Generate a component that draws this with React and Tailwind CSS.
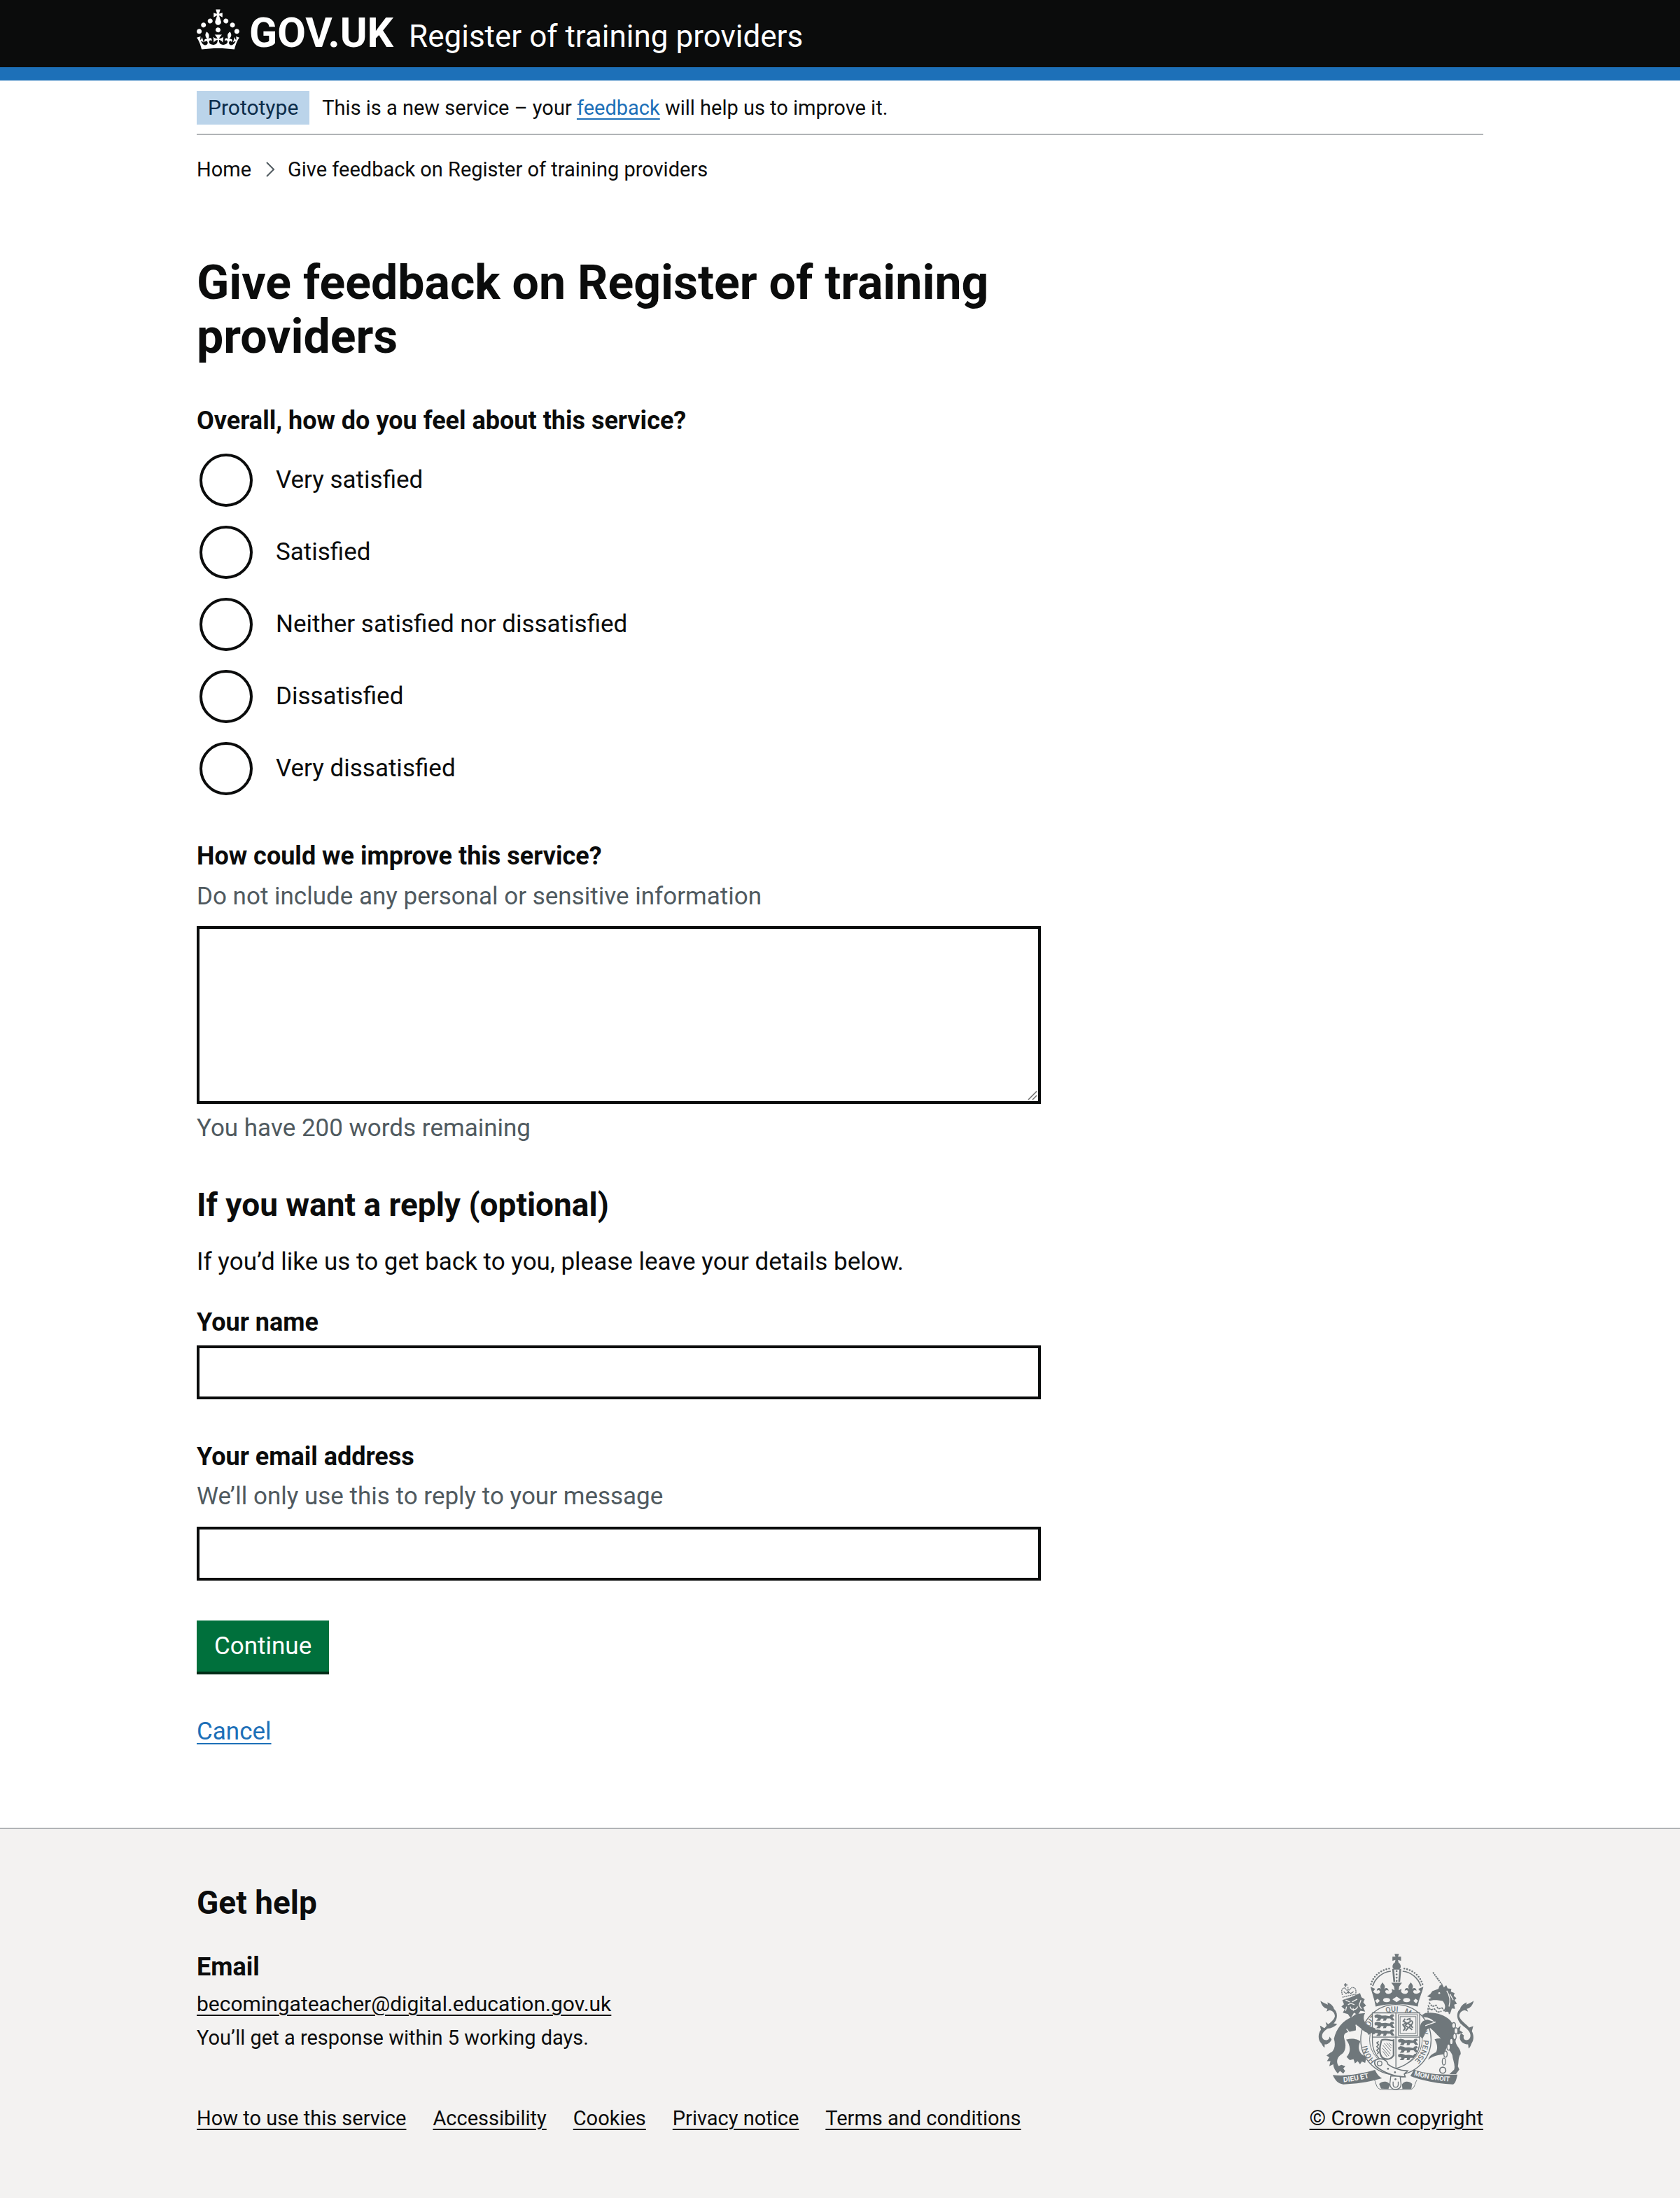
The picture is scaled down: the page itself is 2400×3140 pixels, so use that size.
import React from "react";

const inkLink =
  "text-[#0b0c0c] underline decoration-2 underline-offset-[5px]";
const blueLink =
  "text-[#1d70b8] underline decoration-2 underline-offset-[5px]";
const field =
  "block w-full border-4 border-[#0b0c0c] bg-white px-2 text-[35px] leading-[48px] rounded-none";
const bold = "text-[36px] leading-[48px] font-bold";
const hint = "text-[35px] leading-[48px] text-[#505a5f]";

const options = [
  "Very satisfied",
  "Satisfied",
  "Neither satisfied nor dissatisfied",
  "Dissatisfied",
  "Very dissatisfied",
];

const footerLinks = [
  "How to use this service",
  "Accessibility",
  "Cookies",
  "Privacy notice",
  "Terms and conditions",
];

function Container({ className = "", children }) {
  return (
    <div className={"mx-auto w-full max-w-[1898px] px-[30px] " + className}>
      {children}
    </div>
  );
}

function Crown() {
  return (
    <svg viewBox="0 0 32 30" className="h-[58px] w-[61px] shrink-0" fill="currentColor" aria-hidden="true">
      <path d="M22.6 10.4c-1 .4-2-.1-2.4-1-.4-.9.1-2 1-2.4.9-.4 2 .1 2.4 1s-.1 2-1 2.4m-5.9 6.7c-.9.4-2-.1-2.4-1-.4-.9.1-2 1-2.4.9-.4 2 .1 2.4 1s-.1 2-1 2.4m10.8-3.7c-1 .4-2-.1-2.4-1-.4-.9.1-2 1-2.4.9-.4 2 .1 2.4 1s0 2-1 2.4m3.3 4.8c-1 .4-2-.1-2.4-1-.4-.9.1-2 1-2.4.9-.4 2 .1 2.4 1s-.1 2-1 2.4M17 4.7l2.3 1.2V2.5l-2.3.7-.2-.2.9-3h-3.4l.9 3-.2.2c-.1.1-2.3-.7-2.3-.7v3.4L15 4.7c.1.1.1.2.2.2l-1.3 4c-.1.2-.1.4-.1.6 0 1.1.8 2 1.9 2.2h.7c1-.2 1.9-1.1 1.9-2.1 0-.2 0-.4-.1-.6l-1.3-4c-.1-.2 0-.2.1-.3m-7.6 5.7c.9.4 2-.1 2.4-1 .4-.9-.1-2-1-2.4-.9-.4-2 .1-2.4 1s0 2 1 2.4m-5 3c.9.4 2-.1 2.4-1 .4-.9-.1-2-1-2.4-.9-.4-2 .1-2.4 1s.1 2 1 2.4m-3.2 4.8c.9.4 2-.1 2.4-1 .4-.9-.1-2-1-2.4-.9-.4-2 .1-2.4 1s0 2 1 2.4m14.8 11c4.4 0 8.6.3 12.3.8 1.1-4.5 2.4-7 3.7-8.8l-2.5-.9c.2 1.3.3 1.9 0 2.7-.4-.4-.8-1.1-1.1-2.3l-1.2 4c.7-.5 1.3-.8 2-.9-1.1 2.5-2.6 3.1-3.5 3-1.1-.2-1.7-1.2-1.5-2.1.3-1.2 1.5-1.5 2.1-.1 1.1-2.3-.8-3-2-2.3 1.9-1.9 2.1-3.5.6-5.6-2.1 1.6-2.1 3.2-1.2 5.5-1.2-1.4-3.2-.6-2.5 1.6.9-1.4 2.1-.5 1.9.8-.2 1.1-1.7 2.1-3.5 1.9-2.7-.2-2.9-2.1-2.9-3.6.7-.1 1.9.5 2.9 1.9l.4-4.3c-1.1 1.1-2.1 1.4-3.2 1.4.4-1.2 2.1-3 2.1-3h-5.4s1.7 1.9 2.1 3c-1.1 0-2.1-.2-3.2-1.4l.4 4.3c1-1.4 2.2-2 2.9-1.9-.1 1.5-.2 3.4-2.9 3.6-1.9.2-3.4-.8-3.5-1.9-.2-1.3 1-2.2 1.9-.8.7-2.3-1.2-3-2.5-1.6.9-2.2.9-3.9-1.2-5.5-1.5 2-1.3 3.7.6 5.6-1.2-.7-3.1 0-2 2.3.6-1.4 1.8-1.1 2.1.1.2.9-.3 1.9-1.5 2.1-.9.2-2.4-.5-3.5-3 .6 0 1.2.3 2 .9l-1.2-4c-.3 1.1-.7 1.9-1.1 2.3-.3-.8-.2-1.4 0-2.7l-2.9.9C1.3 23 2.6 25.5 3.7 30c3.7-.5 7.9-.8 12.3-.8" />
    </svg>
  );
}

/* One walking lion, used in the shield quarters. */
const passant =
  "M2 4 L12 0 L24 2 L32 6 L48 5 L66 8 L72 1 L82 0 L86 8 L78 11 L82 18 L88 26 L76 27 L68 18 L54 18 L50 27 L38 28 L40 19 L30 19 L24 28 L8 28 L16 19 L12 15 L4 16 L1 10 Z";

function CoatOfArms() {
  const ink = "#6f777b";
  const paper = "#f3f2f1";
  return (
    <svg viewBox="100 60 670 592" className="h-[197px] w-[223px]" aria-hidden="true">
      <defs>
        <path id="garter" d="M349 525 A122 122 0 1 1 480 545" />
        <path id="motto-left" d="M209 614 Q275 609 345 588" />
        <path id="motto-right" d="M511 585 Q590 609 680 612" />
        <clipPath id="shield">
          <path d="M333 317 H536 V440 C536 500 490 540 434 556 C380 540 333 500 333 440 Z" />
        </clipPath>
      </defs>

      {/* garter */}
      <circle cx="434" cy="432" r="151" fill={paper} stroke={ink} strokeWidth="4" />
      <circle cx="434" cy="432" r="113" fill={paper} stroke={ink} strokeWidth="3" />
      <text fill={ink} fontFamily="Roboto, sans-serif" fontWeight="500" fontSize="32">
        <textPath href="#garter" startOffset="4">HONI</textPath>
        <textPath href="#garter" startOffset="140">SOIT</textPath>
        <textPath href="#garter" startOffset="256">QUI</textPath>
        <textPath href="#garter" startOffset="334">MAL</textPath>
        <textPath href="#garter" startOffset="448">Y</textPath>
        <textPath href="#garter" startOffset="486">PENSE</textPath>
      </text>

      {/* shield */}
      <path d="M333 317 H536 V440 C536 500 490 540 434 556 C380 540 333 500 333 440 Z" fill={paper} stroke={ink} strokeWidth="4" />
      <g clipPath="url(#shield)" fill={ink}>
        <path d={passant} transform="translate(341 323)" />
        <path d={passant} transform="translate(341 355)" />
        <path d={passant} transform="translate(341 388)" />
        <path d={passant} transform="translate(442 428)" />
        <path d={passant} transform="translate(442 460)" />
        <path d={passant} transform="translate(442 492)" />
        <g fill="none" stroke={ink} strokeWidth="3">
          <path d="M434 317 V560 M333 421 H536" strokeWidth="4" />
          <rect x="444" y="325" width="84" height="88" />
          <rect x="452" y="333" width="68" height="72" />
          <path d="M474 342 l-8 10 12 8 -14 8 10 14 -8 12 M480 346 l14 -4 2 12 -12 8 12 6 -4 12 12 10 M484 360 l-10 12 14 8 -12 14 M500 350 q10 6 2 16 q-6 10 6 14" strokeWidth="6" />
          <path d="M372 434 C362 470 362 500 380 512 M372 434 C395 425 415 440 424 434 V500 C410 520 395 518 380 512" strokeWidth="7" />
          <path d="M384 448 L412 480 M378 456 L410 494 M376 468 L404 502 M378 482 L396 506 M394 446 L414 468 M404 446 L416 458" />
          <path d="M360 440 l-8 6 8 8 -8 8 8 8 -8 8 8 8 -6 8" strokeWidth="5" />
        </g>
      </g>

      {/* crown */}
      <g fill={ink}>
        <path d="M428 64 h19 l-4 12 h13 v18 l-13 -5 3 16 h-17 l3 -16 -13 5 v-18 h13 z" />
        <path d="M437 98 c12 2 20 12 17 25 l-6 8 h-22 l-6 -8 c-3 -13 5 -23 17 -25 z" />
        <path d="M418 128 h8 l5 56 h-8 z M457 128 h-8 l-5 56 h8 z" />
        <circle cx="437" cy="138" r="4" />
        <circle cx="437" cy="152" r="4" />
        <circle cx="437" cy="166" r="4" />
        <circle cx="437" cy="180" r="4" />
        <path d="M325 205 L345 214 L336 226 C350 240 364 236 366 226 C364 216 354 218 352 224 C350 208 366 206 372 216 C362 204 370 196 376 186 C384 196 392 204 382 216 C388 206 404 208 402 224 C400 216 388 218 388 226 C392 240 410 238 418 226 L416 214 L428 220 L426 204 L414 188 H460 L448 204 L446 220 L458 214 L456 226 C464 238 482 240 486 226 C486 218 474 216 472 224 C470 208 486 206 492 216 C482 204 490 196 498 186 C506 196 512 204 502 216 C508 206 524 208 522 224 C520 218 510 216 508 226 C510 236 526 240 540 226 L530 214 L552 205 C545 235 532 258 528 290 C470 276 404 276 347 290 C342 258 332 235 325 205 Z" />
      </g>
      <g fill={paper}>
        <path d="M437 247 l18 12 -18 12 -18 -12 z" />
        <ellipse cx="394" cy="262" rx="15" ry="9" />
        <ellipse cx="480" cy="262" rx="15" ry="9" />
        <path d="M345 264 l11 -8 9 10 -12 10 z M529 264 l-11 -8 -9 10 12 10 z" />
      </g>
      <g fill="none" stroke={ink}>
        <path d="M334 202 C346 166 376 142 412 138 M541 202 C529 166 499 142 463 138" strokeWidth="5" />
        <path d="M327 194 C338 156 372 130 412 126 M548 194 C537 156 503 130 463 126" strokeWidth="8" strokeLinecap="round" strokeDasharray="0 12" />
      </g>

      {/* lion */}
      <g fill={ink}>
        <path d="M245 335 C205 350 178 385 168 428 C178 462 166 484 152 488 L136 500 L148 508 L138 524 L153 524 L148 546 L165 538 C166 556 176 566 184 578 L194 566 L208 578 L216 566 L208 556 L217 546 L200 540 L188 545 C176 528 182 508 196 498 C222 484 220 452 213 430 C206 408 218 400 236 398 L262 392 L262 368 C282 378 292 396 310 402 L318 412 L328 402 L340 410 L350 398 L346 384 L332 378 L310 370 C294 352 292 334 302 318 L262 322 Z" />
        <path d="M220 432 C246 424 272 430 281 440 C270 462 274 482 288 496 L307 508 L302 532 L288 526 L280 538 L270 524 L258 534 L252 516 L236 520 L222 506 C242 488 240 456 220 432 Z" />
        <path d="M204 262 L240 250 L280 232 L286 250 L300 258 L294 272 L306 286 L294 294 L302 312 L282 308 L270 326 L254 316 L240 340 L228 322 L206 316 L214 302 L200 290 L211 280 Z" />
        <path d="M110 265 C125 276 136 278 142 282 L140 272 C155 278 166 288 168 300 C182 312 186 335 172 356 C160 374 130 388 120 404 C112 420 120 434 134 434 C146 434 150 424 148 418 L158 430 C152 446 138 454 128 452 L128 466 C118 460 118 452 112 446 C98 432 100 404 112 390 L108 372 C118 376 122 382 128 382 C140 366 168 352 172 332 C172 318 160 306 148 306 L136 312 L140 300 C124 296 114 284 110 265 Z" />
        <path d="M132 356 L144 366 C154 360 166 362 182 364 C172 376 156 384 140 384 Z" />
      </g>
      <g fill="none" stroke={paper} strokeWidth="4">
        <path d="M218 262 L236 270 M246 270 L268 258 M228 282 L240 276 L256 282 M238 290 C240 308 262 308 270 290 M284 262 L276 284 L286 300 M250 296 L252 308 M222 290 L218 308" />
        <path d="M222 386 L236 404 M262 368 L268 390" />
      </g>
      <g fill="none" stroke={ink} strokeWidth="4">
        <path d="M204 240 C198 218 202 212 214 210 L226 222 M262 232 C264 214 258 208 246 208 L232 220 M204 250 L264 236 M228 206 L230 234" strokeDasharray="6 2" />
        <path d="M210 226 l10 8 10 -8 10 8 12 -8" />
        <path d="M218 190 V206 M211 197 H226" strokeWidth="5" />
      </g>

      {/* unicorn */}
      <path d="M593 143 L632 196" stroke={ink} strokeWidth="6" strokeDasharray="7 3" />
      <g fill={ink}>
        <path d="M568 246 L582 236 L590 224 L616 214 L622 200 L634 196 L640 208 L650 198 L656 212 L672 214 L670 226 L686 232 L682 244 L694 254 L686 262 L696 278 L684 282 L688 300 L674 298 L668 318 L640 306 C650 292 644 276 634 266 L610 262 L594 262 L578 266 L574 258 L586 252 Z" />
        <path d="M560 318 C590 312 640 320 668 350 C690 380 694 410 690 440 C694 462 714 472 712 494 C700 508 704 530 700 546 L706 560 L692 580 H664 L684 560 C690 540 678 520 676 498 C666 470 640 470 640 440 C620 420 600 398 582 382 C566 384 560 396 558 410 L548 428 L536 416 L538 376 C540 356 552 348 570 346 L600 356 C590 344 570 334 552 336 L546 326 Z" />
        <path d="M600 430 C620 424 640 426 650 436 C656 460 648 482 640 494 C618 498 594 500 572 518 C580 500 588 494 606 486 C616 466 610 448 600 430 Z" />
        <path d="M768 265 C753 276 742 278 736 282 L738 272 C723 278 712 288 710 300 C696 312 692 335 706 356 C718 374 744 384 752 404 C758 420 750 434 736 434 C726 434 722 424 726 414 L714 404 C698 430 718 452 744 452 L746 470 C756 462 756 452 760 446 C770 432 768 410 760 396 L766 374 L748 380 C738 366 712 352 706 332 C706 318 718 306 730 306 L744 312 L738 300 C754 296 764 284 768 265 Z" />
        <path d="M694 388 L712 372 L708 392 L722 402 L700 410 Z" />
      </g>
      <circle cx="620" cy="232" r="4" fill={paper} />
      <g fill="none" stroke={paper} strokeWidth="4">
        <path d="M652 222 C664 240 670 262 662 290 M666 236 L680 262 M560 372 L604 356" />
      </g>
      <path d="M576 272 L590 290 L606 284 L616 300 L632 296 L644 312 L660 306 L664 322 M572 284 L582 304 L600 300 L612 314 L630 310 M572 296 V330" fill="none" stroke={ink} strokeWidth="5" strokeDasharray="9 3" />
      <g fill={paper} stroke={ink} strokeWidth="4">
        <ellipse cx="682" cy="371" rx="8" ry="12" />
        <ellipse cx="692" cy="394" rx="8" ry="13" />
        <ellipse cx="686" cy="418" rx="7" ry="13" />
        <ellipse cx="672" cy="440" rx="7" ry="13" />
        <ellipse cx="660" cy="464" rx="7" ry="13" />
        <ellipse cx="647" cy="494" rx="7" ry="13" />
        <ellipse cx="640" cy="526" rx="7" ry="15" />
        <circle cx="635" cy="563" r="13" strokeWidth="5" />
      </g>

      {/* ribbon and buckle */}
      <path d="M342 604 C350 622 350 644 372 646 H496 C516 642 514 620 524 606" fill="none" stroke={ink} strokeWidth="3" />
      <path d="M362 622 C378 606 404 612 408 626 L402 644 L370 642 Z M504 622 C488 606 464 612 460 626 L462 644 H500 Z" fill={ink} />
      <path d="M163 584 C220 590 280 580 344 562 C352 580 362 592 374 598 C310 616 260 622 208 624 C186 622 172 606 163 584 Z" fill={ink} />
      <path d="M512 560 C560 580 630 584 698 582 C694 602 690 618 680 624 C620 622 550 610 496 588 Z" fill={ink} />
      <g fill={paper} fontFamily="Roboto, sans-serif" fontWeight="700" fontSize="29">
        <text fontSize="31"><textPath href="#motto-left">DIEU ET</textPath></text>
        <text><textPath href="#motto-right">MON DROIT</textPath></text>
      </g>
      <path d="M346 520 C370 506 396 520 400 538 C424 556 452 564 484 566 L470 580 L474 592 C430 592 384 574 356 552 C342 542 340 530 346 520 Z" fill={paper} stroke={ink} strokeWidth="5" />
      <circle cx="364" cy="534" r="10" fill="none" stroke={ink} strokeWidth="4" />
      <circle cx="400" cy="557" r="4" fill={ink} />
      <circle cx="430" cy="572" r="4" fill={ink} />
      <path d="M412 588 L408 622 C408 654 458 654 456 622 L452 590 Z" fill={paper} stroke={ink} strokeWidth="4" />
      <path d="M422 612 V626 C424 640 442 640 444 626 V612" fill="none" stroke={ink} strokeWidth="4" />
      <circle cx="432" cy="602" r="4" fill={ink} />
    </svg>
  );
}

function Header() {
  return (
    <header className="border-b-[19px] border-[#1d70b8] bg-[#0b0c0c] text-white">
      <Container className="flex h-24 items-start pt-[13px]">
        <a href="#" className="flex items-start gap-[14px]">
          <Crown />
          <span className="text-[59px] leading-[68px] font-bold">GOV.UK</span>
        </a>
        <a href="#" className="ml-[22px] text-[44px] leading-[78px]">
          Register of training providers
        </a>
      </Container>
    </header>
  );
}

function PhaseBanner() {
  return (
    <div className="flex items-center gap-[18px] border-b-2 border-[#b1b4b6] pt-[15px] pb-[13px] text-[29px] leading-[38px]">
      <strong className="bg-[#bbd4ea] px-4 py-[5px] text-[30px] font-normal text-[#0c2d4a]">Prototype</strong>
      <span>
        This is a new service – your{" "}
        <a href="#" className={blueLink}>feedback</a> will help us to improve it.
      </span>
    </div>
  );
}

function Breadcrumbs() {
  return (
    <nav aria-label="Breadcrumb" className="mt-[30px]">
      <ol className="flex items-center text-[29px] leading-[38px]">
        <li><a href="#">Home</a></li>
        <li aria-hidden="true" className="mr-[18px] ml-[21px]">
          <svg viewBox="0 0 13 22" className="h-[22px] w-[13px]" fill="none" stroke="#505a5f" strokeWidth="2">
            <path d="M1 1 L11 11 L1 21" />
          </svg>
        </li>
        <li><a href="#">Give feedback on Register of training providers</a></li>
      </ol>
    </nav>
  );
}

function FeedbackForm() {
  return (
    <form className="max-w-[1206px]">
      <h1 className="mt-[105px] text-[68px] leading-[77px] font-bold">
        Give feedback on Register of training providers
      </h1>

      <fieldset className="mt-[57px]">
        <legend className={bold}>Overall, how do you feel about this service?</legend>
        <div className="mt-[19px] flex flex-col gap-[19px]">
          {options.map((label) => (
            <label key={label} className="flex h-[84px] items-center gap-[33px] pl-1 text-[35px] leading-[48px]">
              <input
                type="radio"
                name="satisfaction"
                className="size-[76px] shrink-0 appearance-none rounded-full border-4 border-[#0b0c0c] bg-white checked:border-[20px]"
              />
              {label}
            </label>
          ))}
        </div>
      </fieldset>

      <div className="mt-[59px]">
        <label htmlFor="improve" className={"block " + bold}>How could we improve this service?</label>
        <p id="improve-hint" className={"mt-[10px] " + hint}>
          Do not include any personal or sensitive information
        </p>
        <div className="relative mt-[18px]">
          <textarea
            id="improve"
            aria-describedby="improve-hint improve-count"
            className={"h-[254px] resize-none " + field}
          />
          <svg
            viewBox="0 0 14 14"
            className="pointer-events-none absolute right-[5px] bottom-[5px] size-[14px]"
            fill="none"
            stroke="#6b6b6b"
            strokeWidth="1.5"
            aria-hidden="true"
          >
            <path d="M1 13 L13 1 M7 13 L13 7" />
          </svg>
        </div>
        <p id="improve-count" className={"mt-[11px] " + hint}>You have 200 words remaining</p>
      </div>

      <h2 className="mt-[57px] text-[46px] leading-[57px] font-bold">If you want a reply (optional)</h2>
      <p className="mt-[29px] text-[35px] leading-[48px]">
        If you’d like us to get back to you, please leave your details below.
      </p>

      <div className="mt-[38px]">
        <label htmlFor="name" className={"block " + bold}>Your name</label>
        <input id="name" type="text" className={"mt-[9px] h-[77px] " + field} />
      </div>

      <div className="mt-[58px]">
        <label htmlFor="email" className={"block " + bold}>Your email address</label>
        <p id="email-hint" className={"mt-[9px] " + hint}>We’ll only use this to reply to your message</p>
        <input id="email" type="email" aria-describedby="email-hint" className={"mt-[19px] h-[77px] " + field} />
      </div>

      <button
        type="button"
        className="mt-[57px] block border-b-4 border-[#002d18] bg-[#00703c] px-[25px] pt-[13px] pb-3 text-[35px] leading-[48px] text-white"
      >
        Continue
      </button>
      <p className="mt-[58px] text-[35px] leading-[48px]">
        <a href="#" className={blueLink}>Cancel</a>
      </p>
    </form>
  );
}

function Footer() {
  return (
    <footer className="mt-[113px] border-t-2 border-[#b1b4b6] bg-[#f3f2f1] pt-[77px] pb-[95px]">
      <Container className="flex items-end justify-between">
        <div>
          <h2 className="text-[46px] leading-[57px] font-bold">Get help</h2>
          <h3 className={"mt-[39px] " + bold}>Email</h3>
          <div className="mt-[10px] flex flex-col items-start gap-[10px] text-[29px] leading-[38px]">
            <a href="#" className={"text-[30px] " + inkLink}>becomingateacher@digital.education.gov.uk</a>
            <p>You’ll get a response within 5 working days.</p>
          </div>
          <ul className="mt-[77px] flex flex-wrap gap-x-[38px] text-[29px] leading-[38px]">
            {footerLinks.map((t) => (
              <li key={t}><a href="#" className={inkLink}>{t}</a></li>
            ))}
          </ul>
        </div>
        <a href="#" className={"flex flex-col items-center gap-5 text-[30px] leading-[38px] " + inkLink}>
          <CoatOfArms />
          © Crown copyright
        </a>
      </Container>
    </footer>
  );
}

export default function App() {
  return (
    <div className="bg-white font-['Roboto',sans-serif] text-[#0b0c0c]">
      <Header />
      <Container>
        <PhaseBanner />
        <Breadcrumbs />
        <main>
          <FeedbackForm />
        </main>
      </Container>
      <Footer />
    </div>
  );
}
